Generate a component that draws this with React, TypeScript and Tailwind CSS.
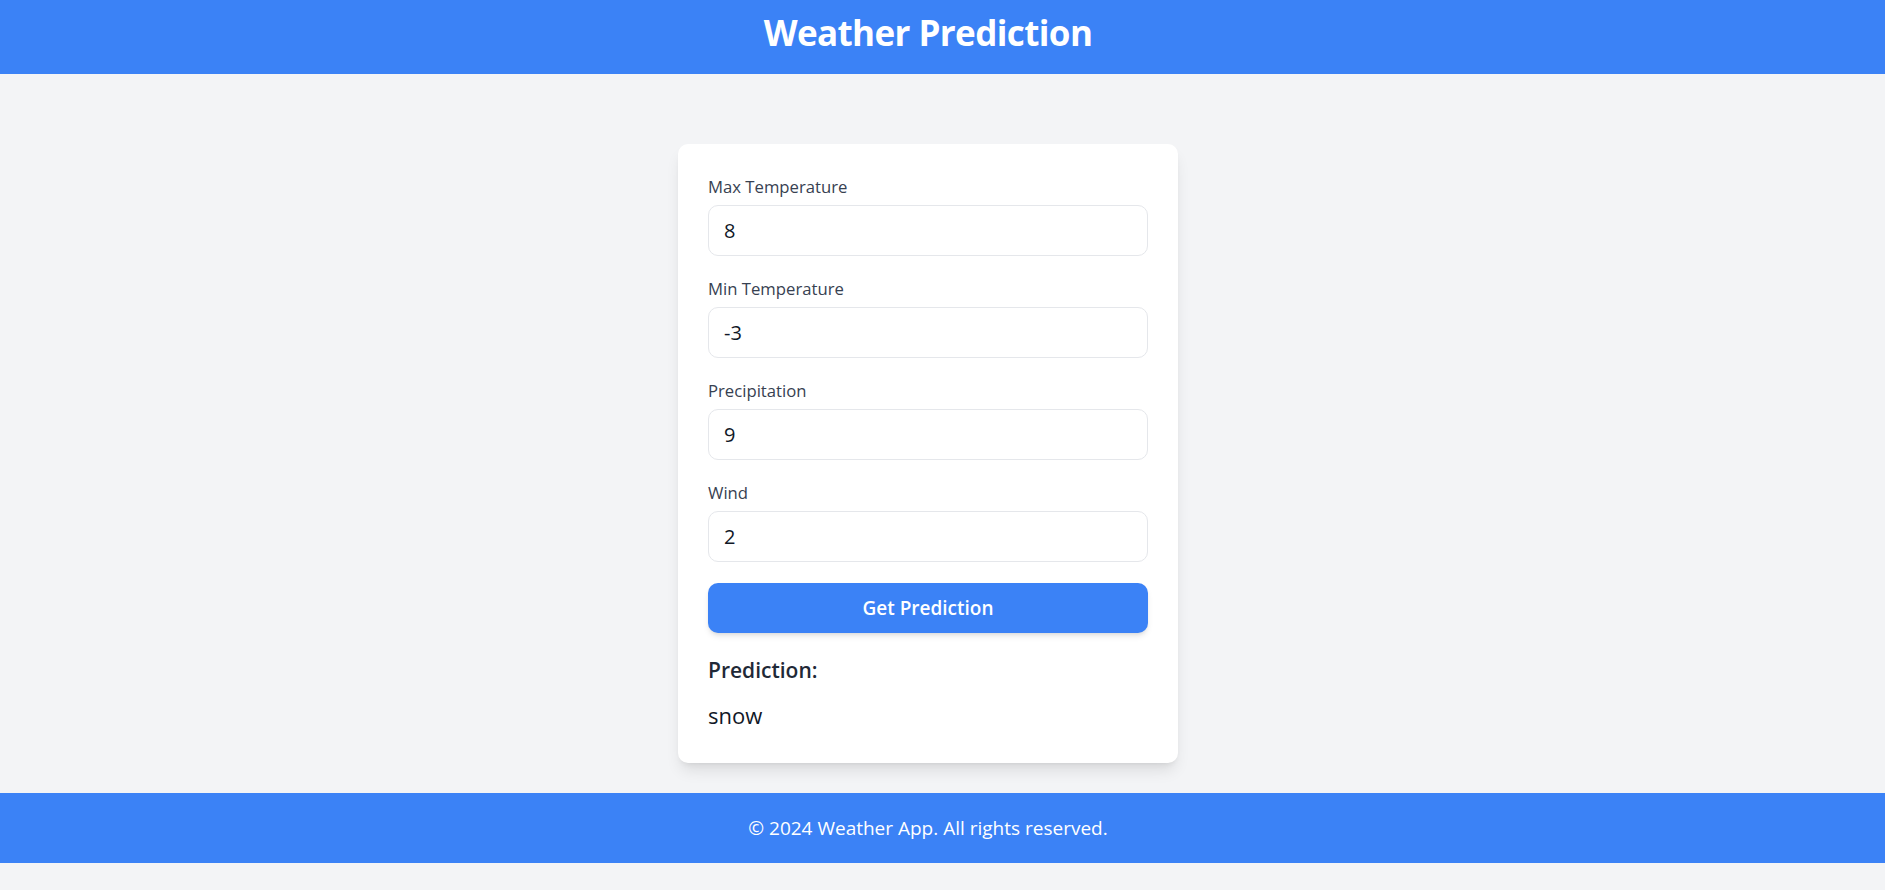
import { useState } from "react"

const fields = [
  { id: "max", label: "Max Temperature", value: "8" },
  { id: "min", label: "Min Temperature", value: "-3" },
  { id: "precip", label: "Precipitation", value: "9" },
  { id: "wind", label: "Wind", value: "2" },
]

export default function App() {
  const [values, setValues] = useState<Record<string, string>>(
    Object.fromEntries(fields.map((f) => [f.id, f.value]))
  )

  return (
    <div className="min-h-screen bg-[#f3f4f6] font-['Segoe_UI','Open_Sans','Noto_Sans',sans-serif]">
      {/* Header */}
      <header className="h-[74px] bg-[#3b82f6] text-white">
        <div className="flex justify-center pr-[29px] pt-[10px]">
          <h1 className="text-[35px] leading-[45px] font-bold tracking-[-0.6px]">Weather Prediction</h1>
        </div>
      </header>

      {/* Form card */}
      <main className="pt-[70px] pb-[30px] pr-[29px]">
        <div className="mx-auto w-[500px] rounded-[10px] bg-white p-[30px] shadow-lg">
          {fields.map((f) => (
            <div key={f.id} className="mb-[20px]">
              <label htmlFor={f.id} className="mb-[6px] block text-[16.7px] leading-[25px] font-medium text-[#374151]">
                {f.label}
              </label>
              <input
                id={f.id}
                type="number"
                value={values[f.id]}
                onChange={(e) => setValues({ ...values, [f.id]: e.target.value })}
                className="block h-[51px] w-full rounded-[10px] border border-[#e5e7eb] px-[15px] text-[20px] text-[#111827] outline-none [appearance:textfield] [&::-webkit-inner-spin-button]:appearance-none"
              />
            </div>
          ))}

          <button className="mt-px h-[50px] w-full rounded-[10px] bg-[#3b82f6] text-[19px] font-semibold text-white shadow-md">
            Get Prediction
          </button>

          <div className="mt-[20px]">
            <h2 className="text-[21px] leading-[35px] font-semibold text-[#1f2937]">Prediction:</h2>
            <p className="mt-[10px] text-[22px] leading-[35px] text-[#111827]">snow</p>
          </div>
        </div>
      </main>

      {/* Footer */}
      <footer className="flex h-[70px] items-center justify-center bg-[#3b82f6] pr-[29px] text-white">
        <p className="text-[19px] leading-[30px]">© 2024 Weather App. All rights reserved.</p>
      </footer>
    </div>
  )
}
